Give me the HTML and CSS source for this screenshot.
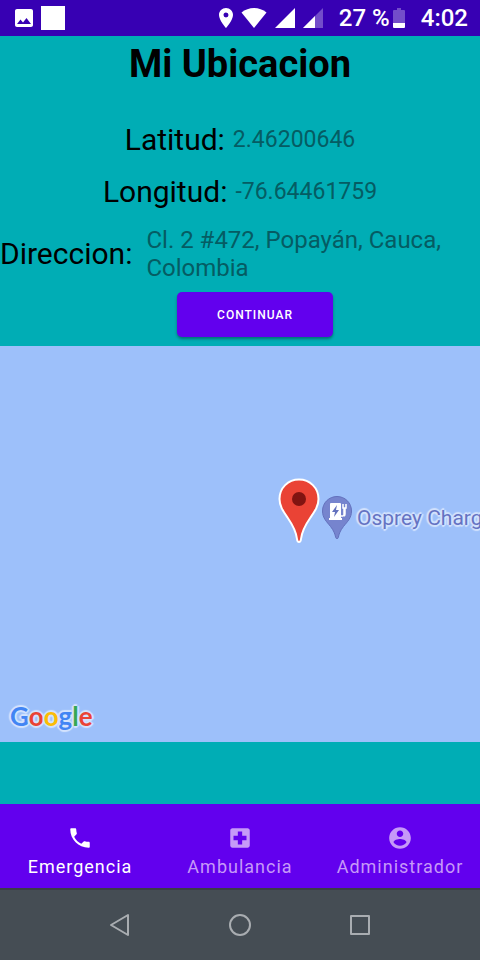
FILE: index.html
```html
<!DOCTYPE html>
<html lang="es">
<head>
<meta charset="utf-8">
<meta name="viewport" content="width=device-width, initial-scale=1">
<title>Mi Ubicacion</title>
<link rel="stylesheet" href="styles.css">
</head>
<body>
<header class="status">
  <div class="status-group">
    <svg width="18" height="18" viewBox="3 3 18 18" fill="#fff" aria-hidden="true"><path d="M21 19V5c0-1.100-.9-2-2-2H5c-1.100 0-2 .9-2 2v14c0 1.100.9 2 2 2h14c1.100 0 2-.9 2-2zM8.500 13.500l2.500 3.010L14.500 12l4.500 6H5l3.500-4.500z"/></svg>
    <span class="status-square"></span>
  </div>
  <div class="status-group">
    <svg width="14" height="20" viewBox="5 2 14 20" fill="#fff" aria-hidden="true"><path d="M12 2C8.130 2 5 5.130 5 9c0 5.250 7 13 7 13s7-7.750 7-13c0-3.870-3.130-7-7-7zm0 9.500a2.500 2.500 0 0 1 0-5 2.500 2.500 0 0 1 0 5z"/></svg>
    <svg width="26" height="20" viewBox="0 0 26 20" fill="#fff" aria-hidden="true"><path d="M13 20L0.500 4.500C4 1.500 8.500 0 13 0s9 1.500 12.500 4.500z"/></svg>
    <svg width="20" height="20" viewBox="0 0 20 20" fill="#fff" aria-hidden="true"><path d="M0 20h20V0z"/></svg>
    <svg width="20" height="20" viewBox="0 0 20 20" fill="#fff" aria-hidden="true"><path d="M0 20h20V0z" opacity=".3"/><path d="M0 20h12V8z"/></svg>
    <span class="battery">27 %<svg width="12" height="20" viewBox="0 0 12 20" fill="#fff" aria-hidden="true"><path opacity=".3" d="M1 2h3V0h4v2h3q1 0 1 1v12H0V3q0-1 1-1z"/><path d="M0 15h12v4q0 1-1 1H1q-1 0-1-1z"/></svg></span>
    <time class="clock">4:02</time>
  </div>
</header>
<main class="content">
  <h1 class="title">Mi Ubicacion</h1>
  <dl class="details">
    <div class="row"><dt>Latitud:</dt><dd>2.46200646</dd></div>
    <div class="row"><dt>Longitud:</dt><dd>-76.64461759</dd></div>
    <div class="row row-address"><dt>Direccion:</dt><dd>Cl. 2 #472, Popayán, Cauca, Colombia</dd></div>
  </dl>
  <button class="continue" type="button">CONTINUAR</button>
  <section class="map" aria-label="Mapa">
    <svg class="marker" width="42" height="66" viewBox="0 0 42 66" aria-hidden="true"><path d="M21 1.500C10 1.500 1.500 10 1.500 21c0 7 3.500 12 8 18.500C14 46 18 52 19 61c.2 2 .5 3 2 3s1.800-1 2-3c1-9 5-15 9.500-21.500C37 33 40.500 28 40.500 21 40.500 10 32 1.500 21 1.500z" fill="#ea4335" stroke="#fff" stroke-width="2"/><circle cx="21" cy="21" r="7" fill="#811411"/></svg>
    <div class="place">
      <svg width="32" height="46" viewBox="0 0 32 46" aria-hidden="true"><path d="M16 1.500C8 1.500 1.500 7.800 1.500 16c0 7 4 10.500 8 15.500 3.200 4 4.500 7.500 5.200 11 .4 1.600 2.200 1.600 2.600 0 .7-3.500 2-7 5.200-11 4-5 8-8.500 8-15.500C30.500 7.800 24 1.500 16 1.500z" fill="#7684ce" stroke="#6371bd"/><path d="M9 9q0-1 1-1h9q1 0 1 1v14h1v2H8v-2h1z" fill="#fff"/><path d="M16 10l-5 7h3l-1 5 5-7h-3z" fill="#6371bd"/><path d="M20 21h2q1 0 1-2v-6M22 9v4h3V9M24 13v6q0 2-1 2" fill="none" stroke="#fff" stroke-width="1.500"/></svg>
      <span>Osprey Charg</span>
    </div>
    <div class="google"><span class="blue">G</span><span class="red">o</span><span class="yellow">o</span><span class="blue">g</span><span class="green">l</span><span class="red">e</span></div>
  </section>
</main>
<nav class="tabs">
  <a class="tab active" href="#emergencia"><svg width="26" height="26" viewBox="0 0 24 24" aria-hidden="true"><path d="M6.620 10.790c1.440 2.830 3.760 5.140 6.590 6.590l2.200-2.200c.27-.27.67-.36 1.020-.24 1.120.37 2.330.57 3.570.57.55 0 1 .45 1 1V20c0 .55-.45 1-1 1-9.390 0-17-7.610-17-17 0-.55.45-1 1-1h3.500c.55 0 1 .45 1 1 0 1.250.2 2.450.57 3.570.11.35.03.74-.25 1.020l-2.200 2.200z"/></svg>Emergencia</a>
  <a class="tab" href="#ambulancia"><svg width="26" height="26" viewBox="0 0 24 24" aria-hidden="true"><path d="M19 3H5c-1.100 0-1.990.9-1.990 2L3 19c0 1.100.9 2 2 2h14c1.100 0 2-.9 2-2V5c0-1.100-.9-2-2-2zm-1 11h-4v4h-4v-4H6v-4h4V6h4v4h4v4z"/></svg>Ambulancia</a>
  <a class="tab" href="#administrador"><svg width="26" height="26" viewBox="0 0 24 24" aria-hidden="true"><path d="M12 2C6.480 2 2 6.480 2 12s4.480 10 10 10 10-4.480 10-10S17.520 2 12 2zm0 3c1.660 0 3 1.340 3 3s-1.340 3-3 3-3-1.340-3-3 1.340-3 3-3zm0 14.200c-2.500 0-4.710-1.280-6-3.220.03-1.990 4-3.080 6-3.080 1.990 0 5.970 1.090 6 3.080-1.290 1.940-3.500 3.220-6 3.220z"/></svg>Administrador</a>
</nav>
<footer class="system">
  <button type="button" aria-label="Atrás"><svg width="24" height="24" viewBox="0 0 24 24"><path d="M20 2v20L3 12z"/></svg></button>
  <button type="button" aria-label="Inicio"><svg width="24" height="24" viewBox="0 0 24 24"><circle cx="12" cy="12" r="10"/></svg></button>
  <button type="button" aria-label="Recientes"><svg width="24" height="24" viewBox="0 0 24 24"><path d="M3 3h18v18H3z"/></svg></button>
</footer>
</body>
</html>
```

FILE: styles.css
```css
* {
  box-sizing: border-box;
}

body {
  margin: 0;
  min-height: 100vh;
  display: flex;
  flex-direction: column;
  background: #00adb5;
  color: #000;
  font-family: Roboto, "Liberation Sans", sans-serif;
}

svg {
  display: block;
  flex-shrink: 0;
}

.status {
  display: flex;
  justify-content: space-between;
  height: 36px;
  padding: 0 12px 0 15px;
  background: #3700b3;
  color: #fff;
  font-size: 24px;
  font-weight: 500;
}

.status-group {
  display: flex;
  align-items: center;
  gap: 8px;
}

.status-square {
  width: 24px;
  height: 24px;
  background: #fff;
}

.battery {
  display: flex;
  align-items: center;
  gap: 3px;
  margin: 0 8px;
}

.content {
  flex: 1;
  display: flex;
  flex-direction: column;
  padding-bottom: 62px;
}

.title {
  margin: 0;
  font-size: 38px;
  line-height: 56px;
  font-weight: 700;
  text-align: center;
}

.details {
  display: flex;
  flex-direction: column;
  gap: 12px;
  margin: 28px 0 10px;
}

.row {
  display: flex;
  justify-content: center;
  align-items: center;
  gap: 8px;
}

.row dt {
  font-size: 30px;
  line-height: 40px;
}

.row dd {
  margin: 0;
  color: #055c63;
  font-size: 23px;
  line-height: 28px;
}

.row-address {
  justify-content: flex-start;
  gap: 14px;
  margin-top: 2px;
}

.row-address dd {
  flex: 1;
  font-size: 24px;
}

.continue {
  align-self: center;
  width: 156px;
  height: 45px;
  margin: 0 0 9px 30px;
  border: 0;
  border-radius: 5px;
  background: #6200ee;
  color: #fff;
  font: 500 12px Roboto, "Liberation Sans", sans-serif;
  letter-spacing: 1px;
  box-shadow: 0 2px 3px rgba(0, 0, 0, 0.35);
}

.map {
  position: relative;
  flex: 1;
  min-height: 240px;
  overflow: hidden;
  background: #9dc0fa;
}

.marker {
  position: absolute;
  left: 278px;
  top: 132px;
}

.place {
  position: absolute;
  left: 321px;
  top: 149px;
  display: flex;
  align-items: center;
  gap: 4px;
  color: #6573c3;
  font-size: 21px;
  white-space: nowrap;
}

.place span,
.google {
  text-shadow: 2px 0 1px #d4e3fd, -2px 0 1px #d4e3fd, 0 2px 1px #d4e3fd, 0 -2px 1px #d4e3fd, 1px 1px 1px #d4e3fd, -1px -1px 1px #d4e3fd;
}

.google {
  position: absolute;
  left: 10px;
  bottom: 8px;
  font-family: Lato, sans-serif;
  font-size: 26px;
  font-weight: 700;
  line-height: 36px;
}

.blue {
  color: #4285f4;
}

.red {
  color: #ea4335;
}

.yellow {
  color: #fbbc05;
}

.green {
  color: #34a853;
}

.tabs {
  display: grid;
  grid-template-columns: repeat(3, 1fr);
  height: 84px;
  background: #6200ee;
}

.tab {
  display: flex;
  flex-direction: column;
  align-items: center;
  gap: 4px;
  padding-top: 21px;
  color: #c699f8;
  font-size: 18px;
  line-height: 24px;
  letter-spacing: 1px;
  text-decoration: none;
}

.tab svg {
  fill: currentColor;
}

.active {
  color: #fff;
}

.system {
  display: flex;
  justify-content: center;
  gap: 96px;
  height: 72px;
  border-top: 2px solid #3a3d45;
  background: #454d54;
}

.system button {
  padding: 0;
  border: 0;
  background: none;
}

.system svg {
  fill: none;
  stroke: #a9adb1;
  stroke-width: 2;
  stroke-linejoin: round;
}
```
